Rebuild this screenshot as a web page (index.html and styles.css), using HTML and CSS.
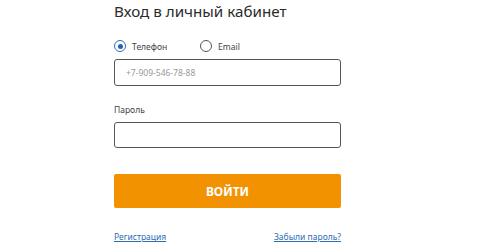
FILE: index.html
```html
<!DOCTYPE html>
<html lang="ru">
<head>
<meta charset="utf-8">
<link rel="stylesheet" href="styles.css">
</head>
<body>
<div class="form">
  <h1 class="title">Вход в личный кабинет</h1>
  <div class="radios">
    <label class="radio"><span class="dot checked"></span><span>Телефон</span></label>
    <label class="radio"><span class="dot"></span><span>Email</span></label>
  </div>
  <div class="input"><span class="ph">+7-909-546-78-88</span></div>
  <div class="label">Пароль</div>
  <div class="input pw"></div>
  <div class="btn">ВОЙТИ</div>
  <div class="links">
    <a class="link" href="#">Регистрация</a>
    <a class="link" href="#">Забыли пароль?</a>
  </div>
</div>
</body>
</html>
```
FILE: styles.css
```css
html, body { margin: 0; background: #fff; }
body { font-family: "Noto Sans", "Open Sans", sans-serif; color: #333; }
.form { width: 227px; margin-left: 114px; display: flex; flex-direction: column; }
.title { margin: 1px 0 0; font-size: 15.2px; font-weight: 400; line-height: 20px; color: #2b2b2b; }
.radios { display: flex; gap: 0; margin-top: 15px; height: 20px; align-items: center; }
.radio { display: flex; align-items: center; gap: 6px; font-size: 8.5px; color: #444; width: 86px; }
.dot { width: 10px; height: 10px; border: 1px solid #555; border-radius: 50%; box-sizing: content-box; position: relative; flex: none; }
.dot.checked { border-color: #2f6fb7; }
.dot.checked::after { content: ""; position: absolute; left: 2.5px; top: 2.5px; width: 5px; height: 5px; border-radius: 50%; background: #1f65b5; }
.input { margin-top: 3px; height: 27px; box-sizing: border-box; border: 1px solid #555; border-radius: 3px; display: flex; align-items: center; padding-left: 11px; }
.ph { font-size: 8.5px; color: #999; }
.label { margin-top: 18px; font-size: 8.5px; color: #444; line-height: 12px; }
.input.pw { margin-top: 6px; height: 26px; }
.btn { margin-top: 26px; height: 34px; background: #f39200; border-radius: 2px; color: #fff; font-weight: 700; font-size: 12px; display: flex; align-items: center; justify-content: center; }
.links { margin-top: 23px; display: flex; justify-content: space-between; font-size: 8.5px; }
.link { color: #2e6db4; text-decoration: underline; }
```
